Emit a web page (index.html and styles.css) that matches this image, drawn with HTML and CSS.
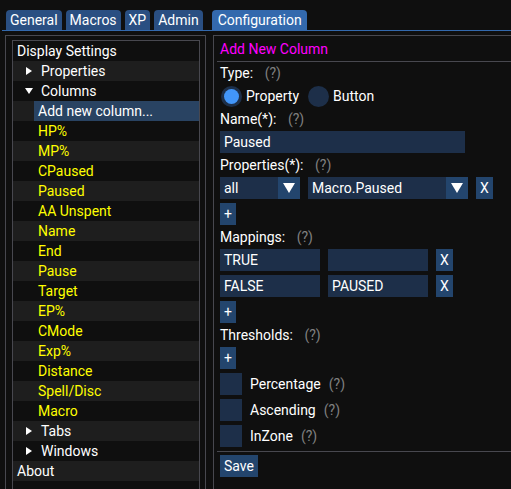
FILE: index.html
```html
<!DOCTYPE html>
<html>
<head>
<meta charset="utf-8">
<link rel="stylesheet" href="styles.css">
</head>
<body>
<div class="tabbar">
  <div class="tab">General</div>
  <div class="tab">Macros</div>
  <div class="tab">XP</div>
  <div class="tab">Admin</div>
  <div class="tab active">Configuration</div>
</div>
<div class="main">
  <div class="left-outer">
    <div class="tree">
      <div class="row lvl0">Display Settings</div>
      <div class="row lvl1"><span class="arr-right"></span><span class="lbl">Properties</span></div>
      <div class="row lvl1"><span class="arr-down"></span><span class="lbl">Columns</span></div>
      <div class="row leaf"><span class="sel">Add new column...</span></div>
      <div class="row leaf yellow"><span class="sel-off">HP%</span></div>
      <div class="row leaf yellow"><span class="sel-off">MP%</span></div>
      <div class="row leaf yellow"><span class="sel-off">CPaused</span></div>
      <div class="row leaf yellow"><span class="sel-off">Paused</span></div>
      <div class="row leaf yellow"><span class="sel-off">AA Unspent</span></div>
      <div class="row leaf yellow"><span class="sel-off">Name</span></div>
      <div class="row leaf yellow"><span class="sel-off">End</span></div>
      <div class="row leaf yellow"><span class="sel-off">Pause</span></div>
      <div class="row leaf yellow"><span class="sel-off">Target</span></div>
      <div class="row leaf yellow"><span class="sel-off">EP%</span></div>
      <div class="row leaf yellow"><span class="sel-off">CMode</span></div>
      <div class="row leaf yellow"><span class="sel-off">Exp%</span></div>
      <div class="row leaf yellow"><span class="sel-off">Distance</span></div>
      <div class="row leaf yellow"><span class="sel-off">Spell/Disc</span></div>
      <div class="row leaf yellow"><span class="sel-off">Macro</span></div>
      <div class="row lvl1"><span class="arr-right"></span><span class="lbl">Tabs</span></div>
      <div class="row lvl1"><span class="arr-right"></span><span class="lbl">Windows</span></div>
      <div class="row lvl0">About</div>
    </div>
  </div>
  <div class="panel">
    <div class="line header">Add New Column</div>
    <div class="sep"></div>
    <div class="line"><span class="lab">Type: </span><span class="help">(?)</span></div>
    <div class="frow">
      <div class="radio"><span class="circle"><span class="dot"></span></span><span class="rlab">Property</span></div>
      <div class="radio second"><span class="circle"></span><span class="rlab">Button</span></div>
    </div>
    <div class="line"><span class="lab">Name(*): </span><span class="help">(?)</span></div>
    <div class="frow"><div class="input w-name">Paused</div></div>
    <div class="line"><span class="lab">Properties(*): </span><span class="help">(?)</span></div>
    <div class="frow">
      <div class="combo w-all"><span class="val">all</span><span class="arrow"><svg width="12" height="10" viewBox="0 0 12 10"><polygon points="0,0 12,0 6,10" fill="#fff"/></svg></span></div>
      <div class="combo w-macro"><span class="val">Macro.Paused</span><span class="arrow"><svg width="12" height="10" viewBox="0 0 12 10"><polygon points="0,0 12,0 6,10" fill="#fff"/></svg></span></div>
      <div class="btn">X</div>
    </div>
    <div class="frow"><div class="btn">+</div></div>
    <div class="line"><span class="lab">Mappings: </span><span class="help">(?)</span></div>
    <div class="frow">
      <div class="input w-map">TRUE</div>
      <div class="input w-map"></div>
      <div class="btn">X</div>
    </div>
    <div class="frow">
      <div class="input w-map">FALSE</div>
      <div class="input w-map">PAUSED</div>
      <div class="btn">X</div>
    </div>
    <div class="frow"><div class="btn">+</div></div>
    <div class="line"><span class="lab">Thresholds: </span><span class="help">(?)</span></div>
    <div class="frow"><div class="btn">+</div></div>
    <div class="frow"><span class="check"></span><span class="clab">Percentage</span><span class="help">(?)</span></div>
    <div class="frow"><span class="check"></span><span class="clab">Ascending</span><span class="help">(?)</span></div>
    <div class="frow"><span class="check"></span><span class="clab">InZone</span><span class="help">(?)</span></div>
    <div class="sep"></div>
    <div class="frow"><div class="btn">Save</div></div>
  </div>
</div>
</body>
</html>
```
FILE: styles.css
```css
html, body {
  margin: 0;
  padding: 0;
  background: #0f0f0f;
  overflow: hidden;
  height: 489px;
}
body {
  font-family: Roboto, "Noto Sans", sans-serif;
  font-size: 14px;
  color: #ffffff;
}
.tabbar {
  display: flex;
  gap: 4px;
  margin: 10px 0 0 2px;
  padding-left: 4px;
  height: 20px;
  border-bottom: 1px solid #3369ad;
}
.tab {
  height: 20px;
  line-height: 20px;
  padding: 0 4px;
  background: #2a4f82;
  border-radius: 4px 4px 0 0;
  white-space: nowrap;
}
.tab.active {
  background: #3369ad;
  margin-left: 5px;
  padding: 0 5px 0 6px;
}
.main {
  display: flex;
  gap: 7px;
  margin-top: 4px;
  padding-left: 5px;
}
.left-outer {
  box-sizing: border-box;
  width: 201px;
  height: 470px;
  border: 1px solid #48484f;
  padding: 4px 5px 0 6px;
  flex: none;
}
.tree {
  height: 460px;
  border: 1px solid #48484f;
}
.row {
  height: 20px;
  line-height: 20px;
  display: flex;
  align-items: center;
  white-space: nowrap;
  background: #0f0f0f;
}
.row:nth-child(even) {
  background: #1e1e1e;
}
.lvl0 { padding-left: 4px; }
.lvl1 { padding-left: 13px; }
.leaf { padding-left: 21px; }
.yellow { color: #ffff00; }
.sel, .sel-off {
  flex: 1;
  align-self: stretch;
  padding-left: 4px;
}
.sel { background: #294362; }
.arr-right {
  width: 0;
  height: 0;
  border-top: 4px solid transparent;
  border-bottom: 4px solid transparent;
  border-left: 6px solid #ffffff;
  margin-right: 9px;
}
.arr-down {
  width: 0;
  height: 0;
  border-left: 4px solid transparent;
  border-right: 4px solid transparent;
  border-top: 6px solid #ffffff;
  margin-left: -1px;
  margin-right: 8px;
}
.panel {
  box-sizing: border-box;
  width: 320px;
  height: 470px;
  flex: none;
  border: 1px solid #48484f;
  padding: 5px 0 0 6px;
  display: flex;
  flex-direction: column;
  gap: 4px;
}
.line {
  height: 16px;
  line-height: 16px;
  display: flex;
  white-space: pre;
}
.header { color: #ff00ff; }
.sep {
  height: 1px;
  background: #48484f;
  margin-left: -3px;
  margin-bottom: -1px;
  flex: none;
}
.help {
  color: #808080;
  margin-left: 8px;
}
.frow {
  height: 22px;
  display: flex;
  align-items: center;
  gap: 8px;
  white-space: nowrap;
  flex: none;
}
.radio {
  display: flex;
  align-items: center;
  height: 22px;
}
.circle {
  width: 21px;
  height: 21px;
  margin: 0 0.5px;
  border-radius: 50%;
  background: #1d2f49;
  display: flex;
  align-items: center;
  justify-content: center;
}
.dot {
  width: 15px;
  height: 15px;
  border-radius: 50%;
  background: #4296fa;
}
.rlab { margin-left: 4px; }
.input {
  box-sizing: border-box;
  height: 22px;
  line-height: 22px;
  background: #1d2f49;
  padding: 0 4px;
}
.w-name { width: 245px; }
.w-map { width: 100px; }
.combo {
  display: flex;
  height: 22px;
  background: #1d2f49;
}
.w-all { width: 80px; }
.w-macro { width: 160px; }
.combo .val {
  flex: 1;
  line-height: 22px;
  padding-left: 4px;
}
.combo .arrow {
  width: 22px;
  height: 22px;
  background: #23456d;
  display: flex;
  align-items: center;
  justify-content: center;
}
.btn {
  height: 22px;
  line-height: 22px;
  padding: 0 4px;
  background: #23456d;
}
.check {
  width: 22px;
  height: 22px;
  background: #1d2f49;
}
.clab { margin-left: 0; }
.frow .help { margin-left: 0; }
```
